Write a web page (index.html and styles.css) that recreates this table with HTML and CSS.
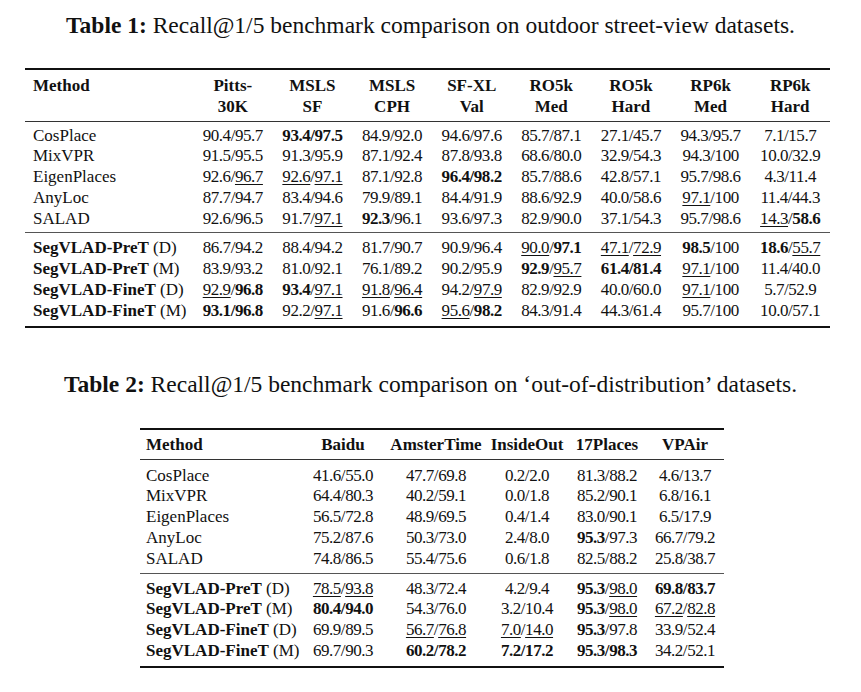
FILE: index.html
```html
<!DOCTYPE html>
<html lang="en">
<head>
    <meta charset="UTF-8">
    <meta name="viewport" content="width=device-width, initial-scale=1.0">
    <title>Recall@1/5 benchmark tables</title>
    <link rel="stylesheet" href="styles.css">
</head>
<body>
    <div class="caption caption-first"><b>Table 1:</b> Recall@1/5 benchmark comparison on outdoor street-view datasets.</div>
    <table class="results results-street">
        <colgroup>
            <col class="col-method">
            <col><col><col><col><col><col><col><col>
        </colgroup>
        <thead>
            <tr>
                <th class="method">Method</th>
                <th>Pitts-<br>30K</th>
                <th>MSLS<br>SF</th>
                <th>MSLS<br>CPH</th>
                <th>SF-XL<br>Val</th>
                <th>RO5k<br>Med</th>
                <th>RO5k<br>Hard</th>
                <th>RP6k<br>Med</th>
                <th>RP6k<br>Hard</th>
            </tr>
        </thead>
        <tbody>
            <tr>
                <td class="method">CosPlace</td>
                <td>90.4/95.7</td><td><b>93.4/97.5</b></td><td>84.9/92.0</td><td>94.6/97.6</td>
                <td>85.7/87.1</td><td>27.1/45.7</td><td>94.3/95.7</td><td>7.1/15.7</td>
            </tr>
            <tr>
                <td class="method">MixVPR</td>
                <td>91.5/95.5</td><td>91.3/95.9</td><td>87.1/92.4</td><td>87.8/93.8</td>
                <td>68.6/80.0</td><td>32.9/54.3</td><td>94.3/100</td><td>10.0/32.9</td>
            </tr>
            <tr>
                <td class="method">EigenPlaces</td>
                <td>92.6/<u>96.7</u></td><td><u>92.6</u>/<u>97.1</u></td><td>87.1/92.8</td><td><b>96.4/98.2</b></td>
                <td>85.7/88.6</td><td>42.8/57.1</td><td>95.7/98.6</td><td>4.3/11.4</td>
            </tr>
            <tr>
                <td class="method">AnyLoc</td>
                <td>87.7/94.7</td><td>83.4/94.6</td><td>79.9/89.1</td><td>84.4/91.9</td>
                <td>88.6/92.9</td><td>40.0/58.6</td><td><u>97.1</u>/100</td><td>11.4/44.3</td>
            </tr>
            <tr class="group-end">
                <td class="method">SALAD</td>
                <td>92.6/96.5</td><td>91.7/<u>97.1</u></td><td><b>92.3</b>/96.1</td><td>93.6/97.3</td>
                <td>82.9/90.0</td><td>37.1/54.3</td><td>95.7/98.6</td><td><u>14.3</u>/<b>58.6</b></td>
            </tr>
        </tbody>
        <tbody>
            <tr>
                <td class="method"><b>SegVLAD-PreT</b> (D)</td>
                <td>86.7/94.2</td><td>88.4/94.2</td><td>81.7/90.7</td><td>90.9/96.4</td>
                <td><u>90.0</u>/<b>97.1</b></td><td><u>47.1</u>/<u>72.9</u></td><td><b>98.5</b>/100</td><td><b>18.6</b>/<u>55.7</u></td>
            </tr>
            <tr>
                <td class="method"><b>SegVLAD-PreT</b> (M)</td>
                <td>83.9/93.2</td><td>81.0/92.1</td><td>76.1/89.2</td><td>90.2/95.9</td>
                <td><b>92.9</b>/<u>95.7</u></td><td><b>61.4/81.4</b></td><td><u>97.1</u>/100</td><td>11.4/40.0</td>
            </tr>
            <tr>
                <td class="method"><b>SegVLAD-FineT</b> (D)</td>
                <td><u>92.9</u>/<b>96.8</b></td><td><b>93.4</b>/<u>97.1</u></td><td><u>91.8</u>/<u>96.4</u></td><td>94.2/<u>97.9</u></td>
                <td>82.9/92.9</td><td>40.0/60.0</td><td><u>97.1</u>/100</td><td>5.7/52.9</td>
            </tr>
            <tr class="group-end">
                <td class="method"><b>SegVLAD-FineT</b> (M)</td>
                <td><b>93.1/96.8</b></td><td>92.2/<u>97.1</u></td><td>91.6/<b>96.6</b></td><td><u>95.6</u>/<b>98.2</b></td>
                <td>84.3/91.4</td><td>44.3/61.4</td><td>95.7/100</td><td>10.0/57.1</td>
            </tr>
        </tbody>
    </table>

    <div class="caption caption-second"><b>Table 2:</b> Recall@1/5 benchmark comparison on ‘out-of-distribution’ datasets.</div>
    <table class="results results-ood">
        <colgroup>
            <col class="col-method2">
            <col class="col-baidu">
            <col class="col-amster">
            <col class="col-inside">
            <col class="col-places">
            <col class="col-vpair">
        </colgroup>
        <thead>
            <tr>
                <th class="method">Method</th>
                <th>Baidu</th>
                <th>AmsterTime</th>
                <th>InsideOut</th>
                <th>17Places</th>
                <th>VPAir</th>
            </tr>
        </thead>
        <tbody>
            <tr>
                <td class="method">CosPlace</td>
                <td>41.6/55.0</td><td>47.7/69.8</td><td>0.2/2.0</td><td>81.3/88.2</td><td>4.6/13.7</td>
            </tr>
            <tr>
                <td class="method">MixVPR</td>
                <td>64.4/80.3</td><td>40.2/59.1</td><td>0.0/1.8</td><td>85.2/90.1</td><td>6.8/16.1</td>
            </tr>
            <tr>
                <td class="method">EigenPlaces</td>
                <td>56.5/72.8</td><td>48.9/69.5</td><td>0.4/1.4</td><td>83.0/90.1</td><td>6.5/17.9</td>
            </tr>
            <tr>
                <td class="method">AnyLoc</td>
                <td>75.2/87.6</td><td>50.3/73.0</td><td>2.4/8.0</td><td><b>95.3</b>/97.3</td><td>66.7/79.2</td>
            </tr>
            <tr class="group-end">
                <td class="method">SALAD</td>
                <td>74.8/86.5</td><td>55.4/75.6</td><td>0.6/1.8</td><td>82.5/88.2</td><td>25.8/38.7</td>
            </tr>
        </tbody>
        <tbody>
            <tr>
                <td class="method"><b>SegVLAD-PreT</b> (D)</td>
                <td><u>78.5</u>/<u>93.8</u></td><td>48.3/72.4</td><td>4.2/9.4</td><td><b>95.3</b>/<u>98.0</u></td><td><b>69.8/83.7</b></td>
            </tr>
            <tr>
                <td class="method"><b>SegVLAD-PreT</b> (M)</td>
                <td><b>80.4/94.0</b></td><td>54.3/76.0</td><td>3.2/10.4</td><td><b>95.3</b>/<u>98.0</u></td><td><u>67.2</u>/<u>82.8</u></td>
            </tr>
            <tr>
                <td class="method"><b>SegVLAD-FineT</b> (D)</td>
                <td>69.9/89.5</td><td><u>56.7</u>/<u>76.8</u></td><td><u>7.0</u>/<u>14.0</u></td><td><b>95.3</b>/97.8</td><td>33.9/52.4</td>
            </tr>
            <tr class="group-end">
                <td class="method"><b>SegVLAD-FineT</b> (M)</td>
                <td>69.7/90.3</td><td><b>60.2/78.2</b></td><td><b>7.2/17.2</b></td><td><b>95.3/98.3</b></td><td>34.2/52.1</td>
            </tr>
        </tbody>
    </table>
</body>
</html>
```

FILE: styles.css
```css
body {
    margin: 0;
    background: #fff;
    color: #111;
    font-family: "Liberation Serif", "Times New Roman", serif;
}
.caption {
    text-align: center;
    font-size: 23.5px;
    line-height: 26px;
}
.caption-first {
    padding-top: 12px;
}
.caption-second {
    margin-top: 43px;
}
.results {
    border-collapse: collapse;
    table-layout: fixed;
    font-size: 17px;
    border-top: 2px solid #111;
    border-bottom: 2px solid #111;
}
.results-street {
    width: 805px;
    margin: 30px 0 0 25px;
}
.results-ood {
    width: 584px;
    margin: 31px 0 0 140px;
}
.col-method { width: 168px; }
.col-method2 { width: 160px; }
.col-baidu { width: 86px; }
.col-amster { width: 100px; }
.col-inside { width: 82px; }
.col-places { width: 78px; }
.col-vpair { width: 78px; }

.results th,
.results td {
    padding: 0;
    text-align: center;
    white-space: nowrap;
}
.results th {
    line-height: 21px;
    padding-top: 5px;
    padding-bottom: 3.5px;
    vertical-align: top;
    border-bottom: 1px solid #333;
}
.results-ood th {
    padding-top: 4px;
    padding-bottom: 4px;
}
.results td {
    line-height: 20.8px;
    letter-spacing: -0.45px;
}
.results .method {
    text-align: left;
    padding-left: 8px;
    letter-spacing: 0;
}
.results-ood .method {
    padding-left: 6px;
}
.results tbody tr:first-child td {
    padding-top: 4px;
}
.results-ood tbody tr:first-child td {
    padding-top: 6px;
}
.results tbody + tbody tr:first-child td {
    padding-top: 5px;
}
.results tbody tr.group-end td {
    padding-bottom: 3px;
}
.results tbody:first-of-type {
    border-bottom: 1px solid #555;
}
.results tbody:last-child tr.group-end td {
    padding-bottom: 4px;
}
u {
    text-decoration: underline;
    text-decoration-thickness: 1px;
    text-underline-offset: 2px;
}
```
